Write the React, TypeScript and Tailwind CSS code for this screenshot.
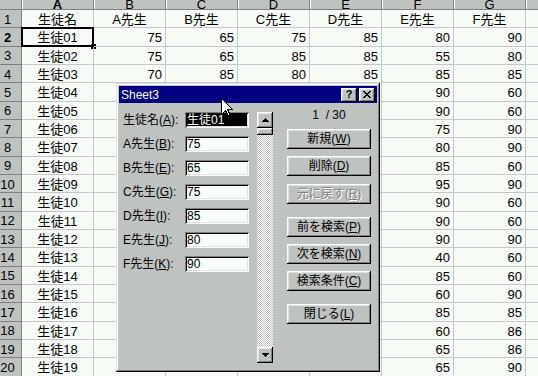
import React from "react";

const FONT = "font-['Liberation_Sans','Noto_Sans_CJK_JP',sans-serif]";
const RAISED =
  "shadow-[inset_-1px_-1px_#000000,inset_1px_1px_#ffffff,inset_-2px_-2px_#808080,inset_2px_2px_#dfe3df]";
const SUNKEN =
  "shadow-[inset_1px_1px_#808080,inset_-1px_-1px_#ffffff,inset_2px_2px_#000000,inset_-2px_-2px_#dfe3df]";

const cols = ["A", "B", "C", "D", "E", "F", "G"];

const fg: [string, string][] = [
  ["90", "60"],
  ["90", "60"],
  ["75", "90"],
  ["80", "90"],
  ["85", "60"],
  ["95", "90"],
  ["90", "60"],
  ["90", "60"],
  ["90", "90"],
  ["40", "60"],
  ["85", "60"],
  ["60", "90"],
  ["85", "85"],
  ["60", "86"],
  ["65", "86"],
  ["65", "90"],
];

const rows: string[][] = [
  ["生徒名", "A先生", "B先生", "C先生", "D先生", "E先生", "F先生"],
  ["生徒01", "75", "65", "75", "85", "80", "90"],
  ["生徒02", "75", "65", "85", "85", "55", "80"],
  ["生徒03", "70", "85", "80", "85", "85", "85"],
  ...fg.map((v, i) => [
    "生徒" + String(i + 4).padStart(2, "0"),
    "",
    "",
    "",
    "",
    v[0],
    v[1],
  ]),
];

function Cell({ v, r, c }: { v: string; r: number; c: number }) {
  const center = r === 0 || c === 0;
  const selected = r === 1 && c === 0;
  return (
    <div
      className={`relative w-[72px] shrink-0 h-full border-r border-b border-[#c4c8c4] flex items-center pt-[2px] px-[3px] text-[13px] leading-none text-black ${
        center ? "justify-center" : "justify-end"
      }`}
    >
      {v}
      {selected && (
        <>
          <div className="absolute -left-[1px] -top-[1px] -right-[1px] -bottom-[1px] border-2 border-black" />
          <div className="absolute -right-[3px] -bottom-[3px] w-[5px] h-[5px] bg-black" />
        </>
      )}
    </div>
  );
}

function Sheet() {
  return (
    <div className="flex flex-col">
      <div className="flex h-[10px]">
        <div className="-ml-[6px] w-[28px] shrink-0 bg-[#bfc3bf] border-r border-b border-[#808080]" />
        {cols.map((c) => (
          <div
            key={c}
            className={`w-[72px] shrink-0 bg-[#bfc3bf] border-r border-b border-[#808080] shadow-[inset_1px_0_#ffffff] flex justify-center text-[13px] leading-[9px] text-black ${
              c === "A" ? "font-bold" : ""
            }`}
          >
            {c}
          </div>
        ))}
        <div className="flex-1 bg-[#bfc3bf] border-b border-[#808080] shadow-[inset_1px_0_#ffffff]" />
      </div>
      {rows.map((row, r) => (
        <div key={r} className="flex h-[18.333px]">
          <div
            className={`-ml-[6px] w-[28px] shrink-0 bg-[#bfc3bf] border-r border-b border-[#808080] flex items-center justify-center pt-[1px] text-[13px] leading-none text-black ${
              r === 1 ? "font-bold" : ""
            }`}
          >
            {r + 1}
          </div>
          {row.map((v, c) => (
            <Cell key={c} v={v} r={r} c={c} />
          ))}
          <div className="flex-1 h-full border-b border-[#c4c8c4]" />
        </div>
      ))}
    </div>
  );
}

function Mn({ k }: { k: string }) {
  return (
    <>
      (<span className="underline underline-offset-[1px]">{k}</span>)
    </>
  );
}

const fields: [string, string, string][] = [
  ["生徒名", "A", "生徒01"],
  ["A先生", "B", "75"],
  ["B先生", "E", "65"],
  ["C先生", "G", "75"],
  ["D先生", "I", "85"],
  ["E先生", "J", "80"],
  ["F先生", "K", "90"],
];

function Btn({
  label,
  k,
  disabled,
  className = "",
}: {
  label: string;
  k: string;
  disabled?: boolean;
  className?: string;
}) {
  return (
    <div
      className={`h-[20px] w-[84px] bg-[#bfc3bf] ${RAISED} flex items-center justify-center text-[12px] leading-none ${
        disabled
          ? "text-[#808080] [text-shadow:1px_1px_0_#ffffff]"
          : "text-black"
      } ${className}`}
    >
      {label}
      <Mn k={k} />
    </div>
  );
}

function Arrow({ up }: { up?: boolean }) {
  return (
    <div
      className={`h-[16px] w-[16px] bg-[#bfc3bf] ${RAISED} flex items-center justify-center`}
    >
      <svg width="7" height="4" viewBox="0 0 7 4" shapeRendering="crispEdges">
        {up ? (
          <path d="M3 0h1v1h1v1h1v1h1v1H0V3h1V2h1V1h1z" fill="#000" />
        ) : (
          <path d="M0 0h7v1H6v1H5v1H4v1H3V3H2V2H1V1H0z" fill="#000" />
        )}
      </svg>
    </div>
  );
}

function Dialog() {
  return (
    <div
      className={`absolute left-[116px] top-[83px] w-[264px] h-[289px] bg-[#bfc3bf] p-[3px] shadow-[inset_-1px_-1px_#000000,inset_1px_1px_#dfe3df,inset_-2px_-2px_#808080,inset_2px_2px_#ffffff] ${FONT}`}
    >
      <div className="h-[17px] bg-[#000080] flex items-center pl-[2px] pr-[2px]">
        <span className="flex-1 text-white text-[12px] leading-none">Sheet3</span>
        <div className="flex gap-[2px]">
          <div
            className={`w-[16px] h-[14px] bg-[#bfc3bf] ${RAISED} flex items-center justify-center text-[11px] font-bold leading-none text-black font-['Liberation_Sans',sans-serif]`}
          >
            ?
          </div>
          <div
            className={`w-[16px] h-[14px] bg-[#bfc3bf] ${RAISED} flex items-center justify-center`}
          >
            <svg width="8" height="7" viewBox="0 0 8 7" shapeRendering="crispEdges">
              <path
                d="M0 0h2v1h1v1h2V1h1V0h2v1H7v1H6v1H5v1h1v1h1v1h1v1H6V6H5V5H3v1H2v1H0V6h1V5h1V4h1V3H2V2H1V1H0z"
                fill="#000"
              />
            </svg>
          </div>
        </div>
      </div>
      <div className="flex pt-[9px] pl-[4px]">
        <div className="flex flex-col gap-[8px]">
          {fields.map(([l, k, v], i) => (
            <div key={i} className="flex h-[16px] items-center">
              <div className="w-[62px] text-[12px] leading-none text-black whitespace-nowrap">
                {l}
                <Mn k={k} />:
              </div>
              <div
                className={`w-[64px] h-[16px] ${SUNKEN} ${
                  i === 0 ? "bg-black" : "bg-[#f8fcf8]"
                } p-[2px] flex items-center`}
              >
                <span
                  className={`text-[12px] leading-none ${
                    i === 0 ? "text-white" : "text-black"
                  }`}
                >
                  {v}
                </span>
              </div>
            </div>
          ))}
        </div>
        <div className="ml-[8px] w-[16px] h-[251px] flex flex-col">
          <Arrow up />
          <div className={`h-[7px] w-[16px] bg-[#bfc3bf] ${RAISED}`} />
          <div className="flex-1 bg-[image:repeating-conic-gradient(#ffffff_0_25%,#bfc3bf_0_50%)] bg-[length:2px_2px]" />
          <Arrow />
        </div>
        <div className="ml-[14px] w-[84px] flex flex-col">
          <div className="-mt-[4px] h-[14px] flex items-center justify-center text-[12px] leading-none text-black whitespace-pre">
            {"1  / 30"}
          </div>
          <div className="mt-[7px] flex flex-col gap-[7.4px]">
            <Btn label="新規" k="W" />
            <Btn label="削除" k="D" />
            <Btn label="元に戻す" k="R" disabled />
            <Btn label="前を検索" k="P" className="mt-[5.4px]" />
            <Btn label="次を検索" k="N" />
            <Btn label="検索条件" k="C" />
            <Btn label="閉じる" k="L" className="mt-[5.5px]" />
          </div>
        </div>
      </div>
    </div>
  );
}

function Cursor() {
  return (
    <svg
      className="absolute left-[221px] top-[98px]"
      width="13"
      height="20"
      viewBox="0 0 13 20"
      shapeRendering="crispEdges"
    >
      <path
        d="M0.5 0.5 L0.5 16.5 L4.5 12.5 L7.5 18.5 L9.5 17.5 L6.5 11.5 L11.5 11.5 Z"
        fill="#ffffff"
        stroke="#000000"
        strokeWidth="1"
      />
    </svg>
  );
}

export default function App() {
  return (
    <div
      className={`relative w-[538px] h-[376px] overflow-hidden bg-[#f6fbf6] ${FONT}`}
    >
      <Sheet />
      <Dialog />
      <Cursor />
    </div>
  );
}
